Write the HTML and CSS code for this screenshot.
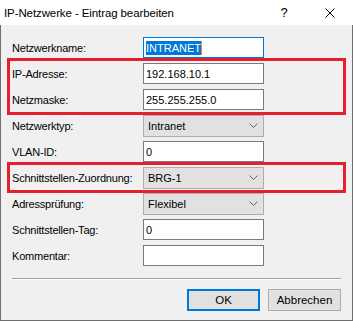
FILE: index.html
```
<!DOCTYPE html>
<html lang="de">
<head>
    <meta charset="UTF-8">
    <meta name="viewport" content="width=device-width, initial-scale=1.0">
    <title>IP-Netzwerke - Eintrag bearbeiten</title>
    <link rel="stylesheet" href="styles.css">
</head>
<body>
    <div class="dialog">
        <div class="titlebar">
            <span class="title">IP-Netzwerke - Eintrag bearbeiten</span>
            <span class="caption-btn help">?</span>
            <span class="caption-btn close">
                <svg width="10" height="10" viewBox="0 0 10 10">
                    <path d="M0.5 0.5 L9.5 9.5 M9.5 0.5 L0.5 9.5" stroke="#000" stroke-width="1" fill="none"/>
                </svg>
            </span>
        </div>

        <div class="content">
            <div class="form">
                <div class="row">
                    <label>Netzwerkname:</label>
                    <div class="field focused"><span class="selected">INTRANET</span><span class="caret"></span></div>
                </div>

                <div class="marked">
                    <div class="row">
                        <label>IP-Adresse:</label>
                        <div class="field">192.168.10.1</div>
                    </div>
                    <div class="row">
                        <label>Netzmaske:</label>
                        <div class="field">255.255.255.0</div>
                    </div>
                </div>

                <div class="row">
                    <label>Netzwerktyp:</label>
                    <div class="combo"><span>Intranet</span><svg class="chevron" width="9" height="5" viewBox="0 0 9 5"><path d="M0.5 0.5 L4.5 4.5 L8.5 0.5" stroke="#606060" fill="none"/></svg></div>
                </div>
                <div class="row">
                    <label>VLAN-ID:</label>
                    <div class="field">0</div>
                </div>

                <div class="marked">
                    <div class="row">
                        <label>Schnittstellen-Zuordnung:</label>
                        <div class="combo"><span>BRG-1</span><svg class="chevron" width="9" height="5" viewBox="0 0 9 5"><path d="M0.5 0.5 L4.5 4.5 L8.5 0.5" stroke="#606060" fill="none"/></svg></div>
                    </div>
                </div>

                <div class="row">
                    <label>Adressprüfung:</label>
                    <div class="combo"><span>Flexibel</span><svg class="chevron" width="9" height="5" viewBox="0 0 9 5"><path d="M0.5 0.5 L4.5 4.5 L8.5 0.5" stroke="#606060" fill="none"/></svg></div>
                </div>
                <div class="row">
                    <label>Schnittstellen-Tag:</label>
                    <div class="field">0</div>
                </div>
                <div class="row">
                    <label>Kommentar:</label>
                    <div class="field"></div>
                </div>
            </div>

            <div class="separator"></div>

            <div class="buttons">
                <button class="ok">OK</button>
                <button>Abbrechen</button>
            </div>
        </div>
    </div>
</body>
</html>
```

FILE: styles.css
```
body {
    margin: 0;
    font-family: "Liberation Sans", Arial, sans-serif;
    font-size: 11px;
    color: #000;
    background-color: #f0f0f0;
}
.dialog {
    width: 353px;
    height: 321px;
    display: flex;
    flex-direction: column;
}
.titlebar {
    height: 25px;
    background-color: #fff;
    display: flex;
    align-items: center;
}
.title {
    flex: 1;
    padding-left: 4px;
    font-size: 11.5px;
    letter-spacing: -0.1px;
}
.caption-btn {
    width: 46px;
    height: 25px;
    display: flex;
    align-items: center;
    justify-content: center;
}
.help {
    font-size: 13px;
}
.content {
    flex: 1;
    background-color: #f0f0f0;
    border: 1px solid #6f6f6f;
    border-top: none;
    padding: 12px 11px 9px 11px;
    display: flex;
    flex-direction: column;
}
.form {
    display: flex;
    flex-direction: column;
    gap: 5px;
}
.marked {
    display: flex;
    flex-direction: column;
    gap: 5px;
    outline: 3px solid #e5202e;
    outline-offset: 2px;
}
.row {
    display: flex;
    align-items: center;
    height: 21px;
}
.row label {
    width: 131px;
    white-space: nowrap;
    letter-spacing: -0.2px;
}
.field {
    width: 121px;
    height: 21px;
    box-sizing: border-box;
    border: 1px solid #7a7a7a;
    background-color: #fff;
    padding: 0 2px;
    display: flex;
    align-items: center;
}
.field.focused {
    border-color: #0078d7;
}
.selected {
    background-color: #0078d7;
    color: #fff;
    padding: 1px 0;
}
.caret {
    width: 1px;
    height: 14px;
    background-color: #f08a24;
}
.combo {
    width: 121px;
    height: 22px;
    box-sizing: border-box;
    border: 1px solid #adadad;
    background-color: #e1e1e1;
    padding: 0 5px 0 4px;
    display: flex;
    align-items: center;
    justify-content: space-between;
}
.separator {
    margin-top: 12px;
    height: 1px;
    background-color: #a0a0a0;
    border-bottom: 1px solid #fff;
}
.buttons {
    margin-top: 9px;
    display: flex;
    justify-content: flex-end;
    gap: 8px;
}
button {
    width: 73px;
    height: 22px;
    font-family: inherit;
    font-size: 11.5px;
    background-color: #e1e1e1;
    border: 1px solid #adadad;
    padding: 0;
    color: #000;
}
button.ok {
    border: 2px solid #0078d7;
}
```
